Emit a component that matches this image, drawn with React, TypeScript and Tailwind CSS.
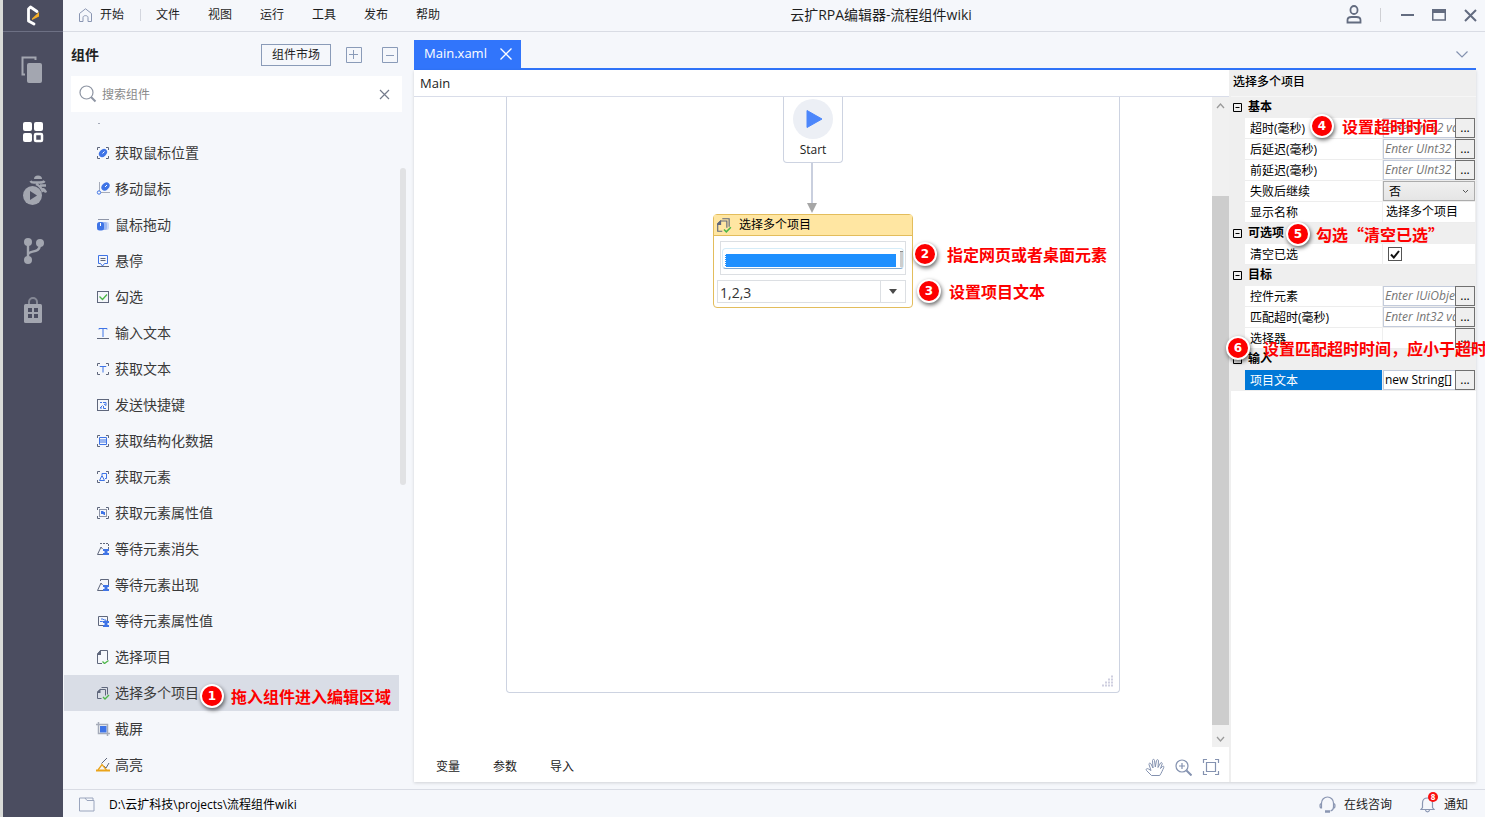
import type { FC, ReactNode } from 'react'
import { twMerge } from 'tailwind-merge'

const SLATE = '#5f677c'
const BLUE = '#3f74e6'
const GREEN = '#4cb648'

const Brackets: FC = () => (
  <path
    d="M1.5 4V1.5H4M10 1.5h2.5V4M12.5 10v2.5H10M4 12.5H1.5V10"
    stroke={SLATE}
    fill="none"
  />
)

const Hourglass: FC = () => (
  <path d="M7 7h6v2h-1.5v2H13v2H7v-2h1.500V9H7z" fill={BLUE} />
)

const MultiPages: FC = () => (
  <>
    <path d="M5.5 12.5h-4V6L4 3.5h5.5v6" stroke={SLATE} fill="none" />
    <path d="M1 7V6l3.5-3.500V7z" fill={SLATE} />
    <path d="M5.5 1.5h6v7" stroke={SLATE} fill="none" />
    <path d="m7 11 2 2 4-4" stroke={GREEN} strokeWidth="1.3" fill="none" />
  </>
)

type Item = { name: string; icon: ReactNode }

const items: Item[] = [
  {
    name: '获取鼠标位置',
    icon: (
      <>
        <Brackets />
        <ellipse cx="7" cy="7" rx="4.6" ry="3.4" fill={BLUE} transform="rotate(-45 7 7)" />
        <path d="M6.5 7.5l2-2" stroke="#fff" />
      </>
    ),
  },
  {
    name: '移动鼠标',
    icon: (
      <>
        <path d="M3.5 0v9M5 10.5h9" stroke="#a5abb9" fill="none" />
        <circle cx="3" cy="10.5" r="1.7" stroke={BLUE} fill="#f5f7fb" />
        <ellipse cx="9.5" cy="4.5" rx="4.6" ry="3.4" fill={BLUE} transform="rotate(-45 9.5 4.5)" />
        <path d="M9 5l2-2" stroke="#fff" />
      </>
    ),
  },
  {
    name: '鼠标拖动',
    icon: (
      <>
        <path d="M2 1.5h11" stroke="#8f96a8" />
        <rect x="7" y="4" width="6" height="8" rx="2" fill="#c9d7f7" />
        <rect x="5" y="4" width="6" height="8" rx="2" fill="#9db8f2" />
        <rect x="1" y="4" width="7" height="8.5" rx="2.5" fill={BLUE} />
        <path d="M4.5 5v3" stroke="#fff" />
      </>
    ),
  },
  {
    name: '悬停',
    icon: (
      <>
        <path d="M2.5 1.5h9v8H8.5L6.5 12 4.5 9.5h-2z" stroke={BLUE} fill="none" />
        <path d="M4.5 4.5h5M4.5 6.5h5M1 12.5h12" stroke={SLATE} />
      </>
    ),
  },
  {
    name: '勾选',
    icon: (
      <>
        <rect x="1.5" y="1.5" width="11" height="11" stroke={SLATE} fill="none" />
        <path d="m3.5 6.5 3 3 4.5-5" stroke={GREEN} strokeWidth="1.3" fill="none" />
      </>
    ),
  },
  {
    name: '输入文本',
    icon: (
      <>
        <path d="M3 3.5v-1h8v1M7 2.5V11" stroke={BLUE} fill="none" />
        <path d="M1 12.5h12" stroke={SLATE} />
      </>
    ),
  },
  {
    name: '获取文本',
    icon: (
      <>
        <Brackets />
        <path d="M4 5v-.5h6V5M7 4.5v6" stroke={BLUE} fill="none" />
      </>
    ),
  },
  {
    name: '发送快捷键',
    icon: (
      <>
        <rect x="1.5" y="1.5" width="11" height="11" stroke={SLATE} fill="none" />
        <path d="M4 4.5h2M7 4.5h3v3L8 6M6.5 7.5 4 10h2M7.5 8v2.5H10" stroke={BLUE} fill="none" />
      </>
    ),
  },
  {
    name: '获取结构化数据',
    icon: (
      <>
        <Brackets />
        <path d="M3.5 3.5h7v7h-7zM3.5 6h7M3.5 8h7" stroke={BLUE} fill="none" />
      </>
    ),
  },
  {
    name: '获取元素',
    icon: (
      <>
        <Brackets />
        <path d="M6 5V3.5h4.5v5H9M3.5 10.5l2.5-5 2.5 5z" stroke={BLUE} fill="none" />
      </>
    ),
  },
  {
    name: '获取元素属性值',
    icon: (
      <>
        <Brackets />
        <rect x="3.5" y="3.5" width="7" height="7" stroke="#8d94a6" fill="none" />
        <path d="M5 6V5h2l1 1h1v3H8L7 8H5" fill={BLUE} />
      </>
    ),
  },
  {
    name: '等待元素消失',
    icon: (
      <>
        <path d="M4 1.5h9M12.5 2v5" stroke={SLATE} strokeDasharray="2 1" fill="none" />
        <path d="M7 12.5H1.5L5 5l1.5 2" stroke={SLATE} fill="none" />
        <Hourglass />
      </>
    ),
  },
  {
    name: '等待元素出现',
    icon: (
      <>
        <path d="M4.5 3V1.5h8V7" stroke={SLATE} fill="none" />
        <path d="M7 12.5H1.5L5 5l1.5 2" stroke={SLATE} fill="none" />
        <Hourglass />
      </>
    ),
  },
  {
    name: '等待元素属性值',
    icon: (
      <>
        <path d="M7 11.5H2.5v-9h9V7" stroke={SLATE} fill="none" />
        <path d="M4 7.5h2.500V8M5 5h2l1 1h2v1" stroke={BLUE} fill="none" />
        <Hourglass />
      </>
    ),
  },
  {
    name: '选择项目',
    icon: (
      <>
        <path d="M6 13.5H1.5V4L4.5 .5h7V10" stroke={SLATE} fill="none" />
        <path d="M1 5V4L4.5 0H5v5z" fill={SLATE} />
        <path d="m6.5 11.5 2 2 4-3" stroke={GREEN} strokeWidth="1.3" fill="none" />
      </>
    ),
  },
  { name: '选择多个项目', icon: <MultiPages /> },
  {
    name: '截屏',
    icon: (
      <>
        <path d="M2.5 0v11.500H14M0 2.500h11.500V14" stroke="#a5abb9" strokeWidth="1.5" fill="none" />
        <rect x="4" y="4" width="6.5" height="6.5" fill={BLUE} />
      </>
    ),
  },
  {
    name: '高亮',
    icon: (
      <>
        <path d="M5.500 5.500 11 0M8 8l2 2L13 5" stroke={SLATE} fill="none" />
        <path d="M2 12 6 6.500 10.500 12" stroke="#eaa41b" strokeWidth="1.3" fill="none" />
        <path d="M0 12.500h14" stroke="#eaa41b" strokeWidth="2" />
      </>
    ),
  },
]

type NoteProps = { no: number; text: string; className: string }

const Note: FC<NoteProps> = ({ no, text, className }) => (
  <div
    className={twMerge(
      "pointer-events-none absolute z-10 flex items-center gap-2 whitespace-nowrap font-['Noto_Sans_CJK_SC',sans-serif]",
      className,
    )}
  >
    <span className="flex size-6 shrink-0 items-center justify-center rounded-full border-2 border-white bg-[#fd0000] font-['DejaVu_Sans',sans-serif] text-xs leading-4 font-bold text-white shadow-[1px_2px_4px_rgba(0,0,0,0.6)]">
      {no}
    </span>
    <span className="text-base leading-6 font-bold text-[#fd0000]">{text}</span>
  </div>
)

const Sidebar: FC = () => (
  <nav className="flex w-[63px] shrink-0 flex-col border-l-3 border-[#d9dbd8] bg-[#4b4d60] text-[#a3a6b0]">
    <div className="flex h-8 items-center justify-center border-b border-[#6d7084] pr-0.5">
      <svg width="16" height="22" viewBox="0 0 16 22" fill="none">
        <path
          d="M10 19 4.500 16V4L6.500 2 13 6.500"
          stroke="#fff"
          strokeWidth="2.8"
          strokeLinejoin="round"
          strokeLinecap="round"
        />
        <path d="M15 7v4.500l-7 3.500v-1.500z" fill="#f5ae27" />
      </svg>
    </div>
    <div className="flex flex-col items-center pt-2">
      <button aria-label="项目" className="flex h-15 w-full items-center justify-center">
        <svg width="30" height="30" viewBox="0 0 30 30">
          <path d="M7 19.5H4.5v-17h13V5" stroke="currentColor" strokeWidth="2" fill="none" />
          <rect x="9" y="8" width="15" height="20" rx="2" fill="currentColor" />
        </svg>
      </button>
      <button aria-label="组件" className="flex h-15 w-full items-center justify-center text-white">
        <svg width="30" height="30" viewBox="0 0 30 30">
          <rect x="5" y="7" width="9" height="9" rx="2" fill="currentColor" />
          <rect x="16" y="7" width="9" height="9" rx="2" fill="currentColor" />
          <rect x="5" y="18" width="9" height="9" rx="2" fill="currentColor" />
          <rect x="17" y="19" width="7" height="7" rx="1" stroke="currentColor" strokeWidth="2.5" fill="none" />
        </svg>
      </button>
      <button aria-label="调试" className="flex h-15 w-full items-center justify-center">
        <svg width="30" height="30" viewBox="0 0 30 30">
          <circle cx="14.5" cy="20.5" r="9.5" fill="currentColor" />
          <path d="m12 16 7 4.5-7 4.500z" fill="#4b4d60" />
          <path d="M16 4a4 3.500 0 0 1 8 0z" fill="currentColor" />
          <path
            d="M12.500 6c1 2 3 1.500 5 1.500h4c2 0 4 0 5-1.500M18 9c4 2 6 5 7 8M22 10.500h6M24 14c2 0 3 1 4 3.500"
            stroke="currentColor"
            strokeWidth="2.4"
            fill="none"
          />
        </svg>
      </button>
      <button aria-label="版本" className="flex h-15 w-full items-center justify-center">
        <svg width="30" height="30" viewBox="0 0 30 30">
          <circle cx="10" cy="7" r="4" fill="currentColor" />
          <circle cx="22" cy="8" r="4" fill="currentColor" />
          <circle cx="10" cy="25" r="4" fill="currentColor" />
          <path d="M10 7v18M10 20c0-6 12 0 12-11" stroke="currentColor" strokeWidth="2.4" fill="none" />
        </svg>
      </button>
      <button aria-label="市场" className="flex h-15 w-full items-center justify-center">
        <svg width="30" height="30" viewBox="0 0 30 30">
          <path d="M11 9V7a4 4 0 0 1 8 0v2" stroke="#858895" strokeWidth="2" fill="none" />
          <rect x="6" y="9" width="18" height="19" rx="1.5" fill="currentColor" />
          <path d="M10 13h4v4h-4zM16 13h4v4h-4zM10 19h4v4h-4zM16 19h4v4h-4z" fill="#4b4d60" />
        </svg>
      </button>
    </div>
  </nav>
)

const menus = ['文件', '视图', '运行', '工具', '发布', '帮助']

const TopBar: FC = () => (
  <header className="flex h-8 shrink-0 items-center border-b border-[#d9dce4] pb-px text-xs text-[#1e1e1e]">
    <button className="flex items-center gap-2 pl-4">
      <svg width="13" height="14" viewBox="0 0 13 14" fill="none" stroke="#8a96b2">
        <path d="M.5 5.500 6.500.8l6 4.700v8H9V9.500C9 7 4 7 4 9.500v4H.5z" />
      </svg>
      开始
    </button>
    <span className="ml-4 h-3 w-px bg-[#d3d6de]" />
    <div className="ml-[15px] flex gap-7">
      {menus.map((menu) => (
        <button key={menu}>{menu}</button>
      ))}
    </div>
    <h1 className="flex-1 text-center text-sm leading-5">云扩RPA编辑器-流程组件wiki</h1>
    <div className="flex items-center pr-2 pl-6 text-[#636c80]">
      <button aria-label="用户">
        <svg width="16" height="20" viewBox="0 0 16 20" fill="none" stroke="currentColor" strokeWidth="1.8">
          <rect x="4.5" y="1" width="7" height="8" rx="3.5" />
          <path d="M1.500 17.500V15c0-2 2-3 4-3h5c2 0 4 1 4 3v2.500z" />
        </svg>
      </button>
      <span className="ml-[18px] h-3.5 w-px bg-[#cfd0d4]" />
      <button aria-label="最小化" className="ml-5">
        <svg width="13" height="14" viewBox="0 0 13 14">
          <path d="M0 7h13" stroke="currentColor" strokeWidth="2" />
        </svg>
      </button>
      <button aria-label="最大化" className="ml-[18px]">
        <svg width="14" height="12" viewBox="0 0 14 12">
          <path d="M.75 1h12.5v10H.75z" stroke="currentColor" strokeWidth="1.500" fill="none" />
          <path d="M0 2h14" stroke="currentColor" strokeWidth="4" />
        </svg>
      </button>
      <button aria-label="关闭" className="ml-[18px]">
        <svg width="13" height="13" viewBox="0 0 13 13">
          <path d="m1 1 11 11M12 1 1 12" stroke="currentColor" strokeWidth="2" />
        </svg>
      </button>
    </div>
  </header>
)

const ComponentPanel: FC = () => (
  <aside className="flex w-[351px] shrink-0 flex-col">
    <div className="flex h-11 shrink-0 items-center pt-0.5 pr-4 pl-2">
      <h2 className="flex-1 text-sm font-bold text-[#222]">组件</h2>
      <button className="h-[22px] w-[70px] border border-[#8a9bb8] text-xs leading-5 text-[#222]">
        组件市场
      </button>
      <button aria-label="展开" className="ml-[15px]">
        <svg width="16" height="16" viewBox="0 0 16 16" fill="none" stroke="#8a9bb8">
          <path d="M.5.5h15v15H.5zM3 7.500h9M7.500 3v9" />
        </svg>
      </button>
      <button aria-label="折叠" className="ml-5">
        <svg width="16" height="16" viewBox="0 0 16 16" fill="none" stroke="#8a9bb8">
          <path d="M.5.5h15v15H.5zM4 8.500h8" />
        </svg>
      </button>
    </div>
    <div className="mr-3 ml-2 flex h-9 shrink-0 items-center bg-white px-2">
      <svg width="18" height="18" viewBox="0 0 18 18" fill="none" stroke="#8e95a3">
        <circle cx="7.5" cy="7.5" r="6.500" strokeWidth="1.2" />
        <path d="m12 12 4.500 4.500" strokeWidth="2" />
      </svg>
      <input
        aria-label="搜索组件"
        placeholder="搜索组件"
        className="ml-[5px] min-w-0 flex-1 pt-0.5 text-xs leading-5 outline-none placeholder:text-[#8a8a8a]"
      />
      <button aria-label="清除" className="mr-1">
        <svg width="11" height="11" viewBox="0 0 11 11">
          <path d="m1 1 9 9M10 1l-9 9" stroke="#747b8c" strokeWidth="1.2" />
        </svg>
      </button>
    </div>
    <div className="flex min-h-0 flex-1 overflow-hidden pr-2 pl-px">
      <ul className="flex-1">
        <li aria-hidden className="h-[23px] pt-[11px] pl-[34px]">
          <span className="block h-px w-0.5 bg-[#a5abb9]" />
        </li>
        {items.map(({ name, icon }) => (
          <li
            key={name}
            className={twMerge(
              'relative flex h-9 items-center gap-[5px] pl-8 text-sm text-[#3a3a3a]',
              name === '选择多个项目' && 'bg-[#d9dde6]',
            )}
          >
            <svg width="14" height="14" viewBox="0 0 14 14">
              {icon}
            </svg>
            {name}
            {name === '选择多个项目' && (
              <Note no={1} text="拖入组件进入编辑区域" className="top-[9px] left-[136px] gap-[7px]" />
            )}
          </li>
        ))}
      </ul>
      <div className="mt-14 ml-px h-[317px] w-1.5 rounded-full bg-[#e1e2e4]" />
    </div>
  </aside>
)

const Flowchart: FC = () => (
  <div className="mx-[92px] mb-[55px] flex flex-1 flex-col items-center rounded-b border border-t-0 border-[#cdd3e1]">
    <div className="flex h-[66px] w-15 flex-col items-center rounded-b border border-t-0 border-[#cdd3e1] pt-0.5">
      <div className="flex size-10 items-center justify-center rounded-full bg-[#eceff5]">
        <svg width="18" height="20" viewBox="0 0 18 20">
          <path d="M3 1.500v17l15-8.500z" fill="#4c86fb" stroke="#4c86fb" strokeLinejoin="round" />
        </svg>
      </div>
      <span className="text-xs leading-[22px] text-[#222]">Start</span>
    </div>
    <svg width="12" height="51" viewBox="0 0 12 51">
      <path d="M5 0v42" stroke="#c9cfde" strokeWidth="2" />
      <path d="M0 40h10L5 50z" fill="#a6a6a6" />
    </svg>
    <div className="relative flex w-[200px] flex-col rounded-sm border border-[#e3bd5c] bg-white">
      <div className="flex h-[21px] items-center gap-[7px] border-b border-[#e3bd5c] bg-[#ffe6a2] pb-px pl-0.5 text-xs text-black">
        <svg width="16" height="16" viewBox="0 0 14 14">
          <MultiPages />
        </svg>
        选择多个项目
      </div>
      <div className="mr-1.5 ml-1.5 mt-[5px] flex h-[34px] items-center border border-[#dcdfe3] px-px">
        <div className="flex h-[21px] flex-1 items-end gap-1 rounded-sm border border-[#d5ecf8] border-b-[#7fa9d0] pb-px pl-0.5">
          <div className="h-[13px] flex-1 border-l border-dotted border-white bg-[#1e90ff]" />
          <div className="h-4 w-[3px] border-t border-[#8a8a8a] bg-[#cdcdcd]" />
        </div>
      </div>
      <div className="mt-[5px] mr-1.5 mb-1 ml-[3px] flex h-[23px] border border-[#dcdfe3]">
        <input
          aria-label="项目文本"
          defaultValue="1,2,3"
          className="min-w-0 flex-1 pt-0.5 pl-0.5 text-sm leading-5 text-[#333] outline-none"
        />
        <button
          aria-label="展开选项"
          className="flex w-[25px] items-center justify-center border-l border-[#dcdfe3]"
        >
          <svg width="8" height="5" viewBox="0 0 8 5">
            <path d="M0 0h8L4 5z" fill="#4a4a4a" />
          </svg>
        </button>
      </div>
      <Note no={2} text="指定网页或者桌面元素" className="top-[27px] left-[199px] gap-2.5" />
      <Note no={3} text="设置项目文本" className="top-16 left-[203px]" />
    </div>
    <svg className="mt-auto mr-[5px] mb-[5px] self-end" width="13" height="13" viewBox="0 0 13 13">
      <path
        d="M1 11.500h12M4 8.500h9M7 5.500h6M10 2.500h3"
        stroke="#cfcfe0"
        strokeWidth="2"
        strokeDasharray="2 1"
      />
    </svg>
  </div>
)

const Designer: FC = () => (
  <section className="flex min-w-0 flex-1 flex-col bg-white">
    <div className="flex h-[27px] shrink-0 items-center border-b border-[#d9dde9] pt-0.5 pl-1.5 text-[13px] text-[#222]">
      Main
    </div>
    <div className="flex min-h-0 flex-1">
      <Flowchart />
      <div className="mb-px flex w-[17px] flex-col bg-[#f0f0f0]">
        <button aria-label="向上" className="flex h-[17px] items-center justify-center">
          <svg width="9" height="6" viewBox="0 0 9 6">
            <path d="m1 5 3.500-4L8 5" stroke="#9a9a9a" strokeWidth="1.3" fill="none" />
          </svg>
        </button>
        <div className="mt-[82px] mb-[5px] flex-1 bg-[#cdcdcd]" />
        <button aria-label="向下" className="flex h-[17px] items-center justify-center">
          <svg width="9" height="6" viewBox="0 0 9 6">
            <path d="m1 1 3.500 4L8 1" stroke="#9a9a9a" strokeWidth="1.3" fill="none" />
          </svg>
        </button>
      </div>
    </div>
    <div className="flex h-[34px] shrink-0 items-center pt-1 pr-[9px] pl-[22px] text-xs text-[#222]">
      <div className="flex flex-1 gap-[33px]">
        <button>变量</button>
        <button>参数</button>
        <button>导入</button>
      </div>
      <div className="flex items-center gap-2.5 text-[#8492b0]">
        <button aria-label="平移">
          <svg width="20" height="20" viewBox="0 0 20 20" fill="none" stroke="currentColor">
            <path
              d="M6.500 18.500 1.500 13.500c-1-1.500.5-2.500 2-1.500L6 13.500 4 7.500c-.3-1.500 1.300-2 2-.5L8 11 7.500 3.500c0-1.500 2-1.500 2 0l.8 6.500L11.500 3.500c.3-1.300 2-1 2 .3L13 10.500l2.500-4.500c.7-1 2-.3 1.700.8L15.500 11.500l2-2c1-.8 1.700 0 1.200 1.200-1 2-2 5-4 7.800z"
              strokeLinejoin="round"
            />
          </svg>
        </button>
        <button aria-label="放大">
          <svg width="17" height="17" viewBox="0 0 17 17" fill="none" stroke="currentColor" strokeWidth="1.2">
            <circle cx="7" cy="7" r="6" />
            <path d="M4 7h6M7 4v6" />
            <path d="m11.500 11.500 5 5" strokeWidth="2" />
          </svg>
        </button>
        <button aria-label="适应屏幕">
          <svg width="18" height="18" viewBox="0 0 18 18" fill="none" stroke="currentColor" strokeWidth="1.2">
            <path d="M4.500 4.500h9v9h-9zM1.500 5V1.500H5M13 1.500h3.500V5M16.500 13v3.500H13M5 16.500H1.500V13" />
          </svg>
        </button>
      </div>
    </div>
  </section>
)

type Field = {
  id: string
  label: string
  placeholder?: string
  value?: string
  kind: 'expression' | 'select' | 'text' | 'check'
  selected?: boolean
  note?: ReactNode
}

type Group = { title: string; note?: ReactNode; fields: Field[] }

const groups: Group[] = [
  {
    title: '基本',
    fields: [
      {
        id: 'timeout',
        label: '超时(毫秒)',
        placeholder: 'Enter Int32 value',
        kind: 'expression',
        note: <Note no={4} text="设置超时时间" className="-top-1 left-[79px]" />,
      },
      { id: 'delayAfter', label: '后延迟(毫秒)', placeholder: 'Enter UInt32 value', kind: 'expression' },
      { id: 'delayBefore', label: '前延迟(毫秒)', placeholder: 'Enter UInt32 value', kind: 'expression' },
      { id: 'continueOnError', label: '失败后继续', value: '否', kind: 'select' },
      { id: 'displayName', label: '显示名称', value: '选择多个项目', kind: 'text' },
    ],
  },
  {
    title: '可选项',
    note: <Note no={5} text="勾选“清空已选”" className="-top-px left-[55px] gap-1.5" />,
    fields: [{ id: 'clearSelected', label: '清空已选', kind: 'check' }],
  },
  {
    title: '目标',
    fields: [
      { id: 'element', label: '控件元素', placeholder: 'Enter IUiObject value', kind: 'expression' },
      { id: 'matchTimeout', label: '匹配超时(毫秒)', placeholder: 'Enter Int32 value', kind: 'expression' },
      {
        id: 'selector',
        label: '选择器',
        kind: 'expression',
        note: <Note no={6} text="设置匹配超时时间，应小于超时" className="top-2 -left-[5px] gap-[13px]" />,
      },
    ],
  },
  {
    title: '输入',
    fields: [
      { id: 'itemTexts', label: '项目文本', value: 'new String[]', kind: 'expression', selected: true },
    ],
  },
]

const FieldValue: FC<{ field: Field }> = ({ field }) => {
  if (field.kind === 'select') {
    return (
      <div className="relative flex flex-1">
        <select
          id={field.id}
          className="flex-1 appearance-none border border-[#acacac] bg-linear-to-b from-[#f0f0f0] to-[#e5e5e5] pt-px pl-[5px] text-xs leading-4"
        >
          <option>{field.value}</option>
        </select>
        <svg className="pointer-events-none absolute top-2 right-1.5" width="7" height="5" viewBox="0 0 7 5">
          <path d="m1 1 2.500 2.500L6 1" stroke="#555" fill="none" />
        </svg>
      </div>
    )
  }
  if (field.kind === 'check') {
    return (
      <div className="relative flex flex-1 items-center pl-[5px]">
        <input
          id={field.id}
          type="checkbox"
          defaultChecked
          className="size-3.5 appearance-none border border-[#555] bg-white"
        />
        <svg className="pointer-events-none absolute left-[7px]" width="10" height="9" viewBox="0 0 10 9">
          <path d="M1 4.500 3.800 7.500 9 1" stroke="#111" strokeWidth="2" fill="none" />
        </svg>
      </div>
    )
  }
  if (field.kind === 'text') {
    return (
      <input
        id={field.id}
        defaultValue={field.value}
        className="min-w-0 flex-1 pl-[3px] text-xs leading-4 outline-none"
      />
    )
  }
  return (
    <>
      <input
        id={field.id}
        defaultValue={field.value}
        placeholder={field.placeholder}
        className={twMerge(
          'min-w-0 flex-1 pl-px text-xs leading-4 outline-none placeholder:text-[#767676] placeholder:italic',
          (field.placeholder || field.value) && 'border border-r-0 border-[#c3cbdb]',
        )}
      />
      <button
        aria-label={`编辑${field.label}`}
        className="w-5 border border-[#707070] bg-[#efefef] text-xs leading-4"
      >
        ...
      </button>
    </>
  )
}

const PropertyPanel: FC = () => (
  <aside className="ml-0.5 flex w-[245px] shrink-0 flex-col bg-white text-xs text-black">
    <h2 className="h-[27px] border-b border-[#f6f6f6] bg-[#efefef] pl-0.5 leading-6 font-medium">
      选择多个项目
    </h2>
    {groups.map((group) => (
      <section key={group.title} className="bg-[#efefef] pr-px">
        <div className="relative flex h-[21px] items-center gap-1.5 pb-px pl-0.5">
          <svg width="9" height="9" viewBox="0 0 9 9" fill="none" stroke="#000">
            <path d="M.5.5h8v8h-8zM2.500 4.500h4" />
          </svg>
          <h3 className="font-bold">{group.title}</h3>
          {group.note}
        </div>
        {group.fields.map((field) => (
          <div key={field.id} className="relative flex h-[21px] pl-3.5">
            <label
              htmlFor={field.id}
              className={twMerge(
                'w-[137px] border-b border-[#ededed] bg-white pt-px pl-[5px] leading-5',
                field.selected && 'bg-[#0078d7] text-white',
              )}
            >
              {field.label}
            </label>
            <div className="ml-px flex min-w-0 flex-1 border-b border-[#ededed] bg-white">
              <FieldValue field={field} />
            </div>
            {field.note}
          </div>
        ))}
      </section>
    ))}
  </aside>
)

const Workspace: FC = () => (
  <main className="flex min-w-0 flex-1 flex-col pt-2 pr-[9px] pb-[7px]">
    <div className="flex h-[30px] shrink-0 items-center justify-between border-b-2 border-[#3175fb]">
      <div className="flex h-full w-[107px] items-center justify-between bg-[#3175fb] pr-[9px] pl-2.5 text-[13px] text-white">
        <button>Main.xaml</button>
        <button aria-label="关闭标签">
          <svg width="12" height="12" viewBox="0 0 12 12">
            <path d="m.5.5 11 11M11.500.5l-11 11" stroke="#fff" strokeWidth="1.3" />
          </svg>
        </button>
      </div>
      <button aria-label="更多标签" className="mr-2">
        <svg width="12" height="7" viewBox="0 0 12 7">
          <path d="m.5.5 5.500 5.500L11.500.5" stroke="#8492b0" strokeWidth="1.2" fill="none" />
        </svg>
      </button>
    </div>
    <div className="flex min-h-0 flex-1 bg-[#efefef] shadow-[0_1px_3px_rgba(0,0,0,0.15)]">
      <Designer />
      <PropertyPanel />
    </div>
  </main>
)

const StatusBar: FC = () => (
  <footer className="flex h-7 shrink-0 items-center border-t border-[#d9dce4] pt-0.5 pr-[17px] pl-4 text-xs text-[#222]">
    <svg width="16" height="15" viewBox="0 0 16 15" fill="none" stroke="#9aa5bd">
      <path d="M.5 14V1h5.500l2 2.500h7V14zM6 1h8v2.500" />
    </svg>
    <span className="ml-3.5 flex-1 text-black">D:\云扩科技\projects\流程组件wiki</span>
    <button className="flex items-center gap-2">
      <svg width="17" height="17" viewBox="0 0 17 17" fill="none" stroke="#8a96b2" strokeWidth="1.2">
        <path d="M2.500 8V7a6 6 0 0 1 12 0v4c0 2-1 3.500-3 4M2.500 7.500C.5 7.500.5 12 2.500 12zM14.500 7.500c2 0 2 4.500 0 4.500" />
        <path d="M6 15.500h5" strokeWidth="2.5" />
      </svg>
      在线咨询
    </button>
    <button className="ml-7 flex items-center gap-2">
      <span className="relative">
        <svg width="16" height="17" viewBox="0 0 16 17" fill="none" stroke="#8a96b2" strokeWidth="1.2">
          <path d="M1 13.500h13l-1.500-2V7c0-3-2-5-5-5s-5 2-5 5v4.500zM5.500 14c.5 2.500 3.500 2.500 4 0" />
        </svg>
        <span className="absolute -top-1 left-2 flex size-2.5 items-center justify-center rounded-full bg-[#fa0f0f] text-[8px] leading-none font-bold text-white">
          8
        </span>
      </span>
      通知
    </button>
  </footer>
)

const App: FC = () => (
  <div
    lang="zh-CN"
    className="flex h-screen overflow-hidden bg-[#f5f7fb] font-['Open_Sans','Noto_Sans_CJK_SC',sans-serif]"
  >
    <Sidebar />
    <div className="flex min-w-0 flex-1 flex-col">
      <TopBar />
      <div className="flex min-h-0 flex-1">
        <ComponentPanel />
        <Workspace />
      </div>
      <StatusBar />
    </div>
  </div>
)

export default App
